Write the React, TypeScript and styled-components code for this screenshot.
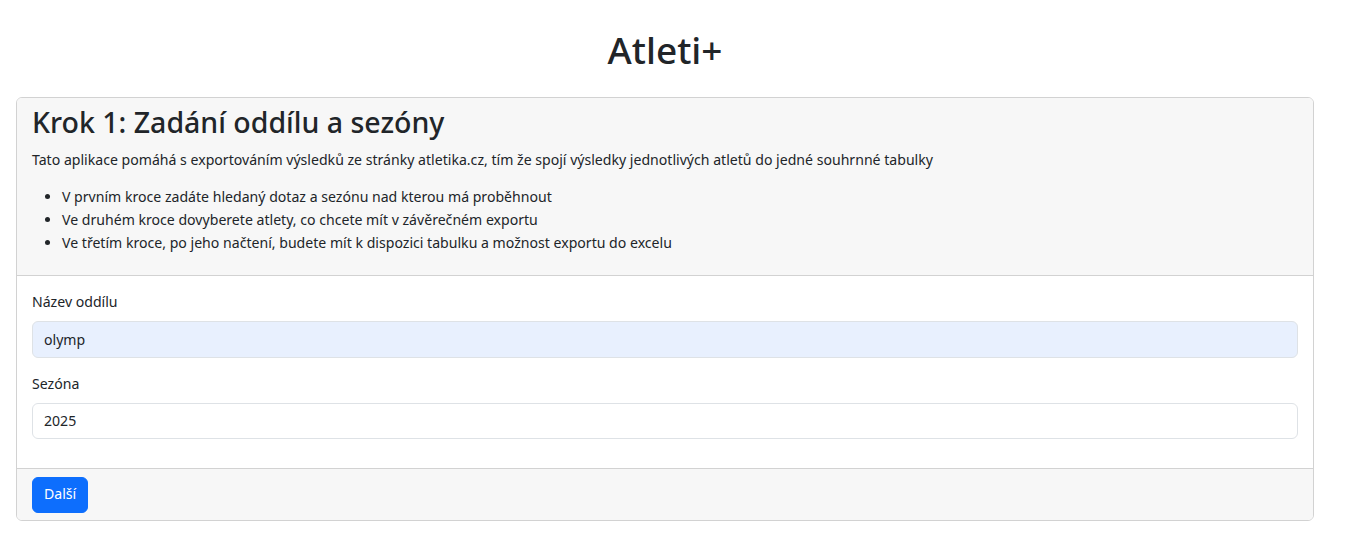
import React from "react";
import styled, { createGlobalStyle } from "styled-components";

const Global = createGlobalStyle`
  html, body { margin: 0; padding: 0; background: #fff; }
  body {
    font-family: "Noto Sans", "Open Sans", sans-serif;
    font-size: 14.1px;
    line-height: 22.5px;
    color: #212529;
  }
  * { box-sizing: border-box; }
`;

const Page = styled.div`
  padding: 0 32px 0 16px;
`;

const Title = styled.h1`
  margin: 28px 0 25px;
  font-size: 37px;
  font-weight: 500;
  line-height: 44px;
  text-align: center;
`;

const Card = styled.div`
  border: 1px solid #d2d2d2;
  border-radius: 6px;
  overflow: hidden;
  background: #fff;
`;

const CardHeader = styled.div`
  background: #f7f7f7;
  padding: 7.5px 15px;
  border-bottom: 1px solid #d2d2d2;
`;

const StepTitle = styled.h2`
  margin: 0 0 9.5px;
  font-size: 28.5px;
  font-weight: 500;
  line-height: 33.6px;
`;

const Intro = styled.p`
  margin: 0 0 13.5px;
`;

const Steps = styled.ul`
  margin: 0 0 14px;
  padding-left: 30px;
  li { line-height: 23px; }
`;

const CardBody = styled.div`
  padding: 15px 15px 14px;
`;

const Field = styled.div`
  margin-bottom: 15px;
`;

const Label = styled.label`
  display: block;
  margin-bottom: 7.5px;
`;

const Input = styled.input<{ $filled?: boolean }>`
  display: block;
  width: 100%;
  height: 36.5px;
  padding: 6px 11px;
  font: inherit;
  color: #212529;
  background: ${(p) => (p.$filled ? "#e8f0fe" : "#fff")};
  border: 1px solid #dee2e6;
  border-radius: 6px;
  outline: none;
`;

const CardFooter = styled.div`
  background: #f7f7f7;
  padding: 7.5px 15px;
  border-top: 1px solid #d2d2d2;
`;

const Button = styled.button`
  display: block;
  height: 36px;
  padding: 0 11px;
  font: inherit;
  color: #fff;
  background: #0d6efd;
  border: 1px solid #0d6efd;
  border-radius: 6px;
  cursor: pointer;
`;

export default function App() {
  return (
    <Page>
      <Global />
      <Title>Atleti+</Title>
      <Card>
        <CardHeader>
          <StepTitle>Krok 1: Zadání oddílu a sezóny</StepTitle>
          <Intro>
            Tato aplikace pomáhá s exportováním výsledků ze stránky atletika.cz, tím že spojí výsledky
            jednotlivých atletů do jedné souhrnné tabulky
          </Intro>
          <Steps>
            <li>V prvním kroce zadáte hledaný dotaz a sezónu nad kterou má proběhnout</li>
            <li>Ve druhém kroce dovyberete atlety, co chcete mít v závěrečném exportu</li>
            <li>Ve třetím kroce, po jeho načtení, budete mít k dispozici tabulku a možnost exportu do excelu</li>
          </Steps>
        </CardHeader>
        <CardBody>
          <Field>
            <Label htmlFor="oddil">Název oddílu</Label>
            <Input id="oddil" $filled defaultValue="olymp" />
          </Field>
          <Field>
            <Label htmlFor="sezona">Sezóna</Label>
            <Input id="sezona" defaultValue="2025" />
          </Field>
        </CardBody>
        <CardFooter>
          <Button>Další</Button>
        </CardFooter>
      </Card>
    </Page>
  );
}
